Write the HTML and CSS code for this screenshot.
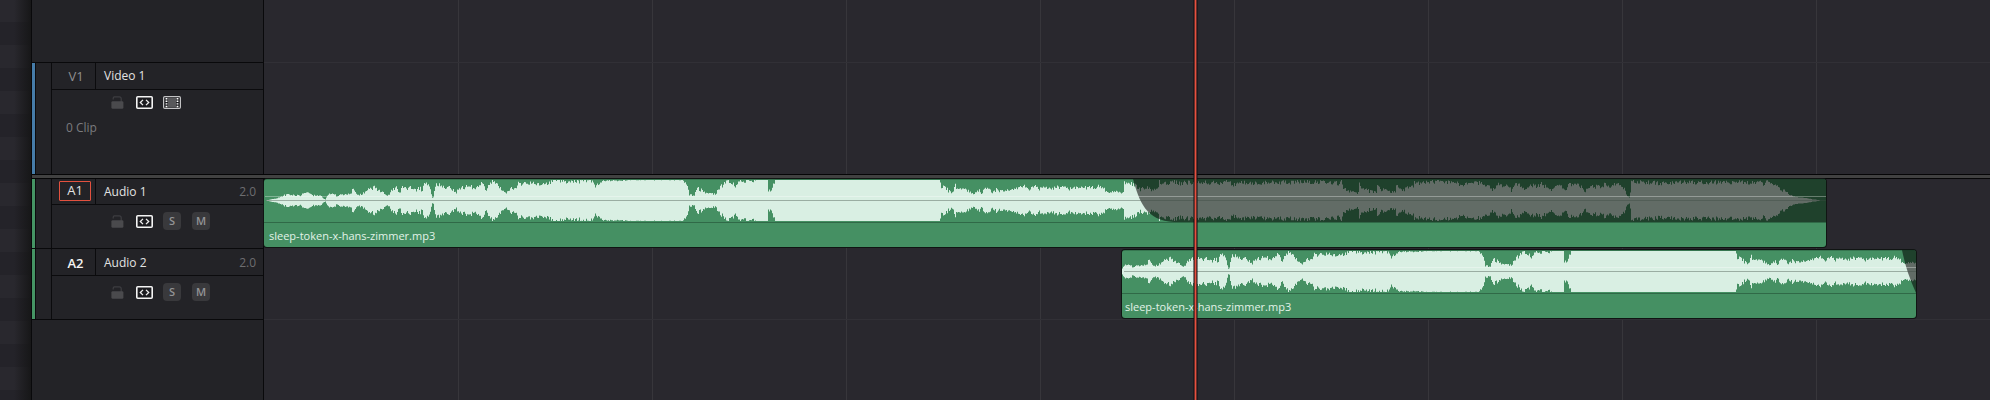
FILE: index.html
```html
<!DOCTYPE html>
<html lang="en">
<head>
<meta charset="utf-8">
<title>Timeline</title>
<link rel="stylesheet" href="styles.css">
</head>
<body>
<svg class="defs" width="0" height="0">
  <symbol id="lock" viewBox="0 0 13 13">
    <path d="M2.2 3.6V2.2Q2.2.9 3.5.9h4.8q1.9 0 1.9 1.9V6" fill="none" stroke="#3e3e42" stroke-width="1.2"/>
    <rect x=".4" y="5.2" width="12" height="7.6" rx="1.4" fill="#4a4a4d"/>
  </symbol>
  <symbol id="auto" viewBox="0 0 17 13">
    <rect x=".8" y=".8" width="15.4" height="11.4" rx="1" fill="#1c1c20" stroke="#f5f5f5" stroke-width="1.6"/>
    <path d="M7 3.9 4.3 6.5 7 9.1M10 3.9l2.7 2.6L10 9.1" fill="none" stroke="#f0f0f0" stroke-width="1.3"/>
  </symbol>
  <symbol id="film" viewBox="0 0 18 13">
    <rect x=".6" y=".6" width="16.8" height="11.8" rx="1.2" fill="#1d1d21" stroke="#c2c2c4" stroke-width="1.2"/>
    <rect x="5" y="2" width="8" height="9" fill="#58585b"/>
    <path d="M3.5 2v9.2M14.5 2v9.2" stroke="#fff" stroke-width="1.8" stroke-dasharray="1.4 1.2"/>
  </symbol>
</svg>
<div class="app">
  <aside class="media-strip"></aside>
  <main class="timeline">
    <div class="row row-top"><div class="head-empty"></div></div>

    <div class="row row-video">
      <div class="head">
        <div class="color video"></div><div class="gutter"></div>
        <div class="body">
          <div class="title"><div class="tag"><span class="dim">V1</span></div><span class="name">Video 1</span></div>
          <div class="tools video-tools">
            <svg class="lock"><use href="#lock"/></svg><svg class="auto"><use href="#auto"/></svg><svg class="film"><use href="#film"/></svg>
          </div>
          <div class="count">0 Clip</div>
        </div>
      </div>
    </div>

    <div class="divider"></div>

    <div class="row row-a1">
      <div class="head">
        <div class="color audio"></div><div class="gutter"></div>
        <div class="body">
          <div class="title"><div class="tag"><span class="target">A1</span></div><span class="name">Audio 1</span><span class="chan">2.0</span></div>
          <div class="tools">
            <svg class="lock"><use href="#lock"/></svg><svg class="auto"><use href="#auto"/></svg><span class="btn">S</span><span class="btn mute">M</span>
          </div>
        </div>
      </div>
      <div class="lane">
        <div class="clip clip-one">
          <svg class="wave" width="1562" height="43" data-start="264">
            <path class="peaks"/>
            <path class="fade" d="M869 0C875 22 882 42 910 43H1562V0Z"/>
          </svg>
          <div class="label">sleep-token-x-hans-zimmer.mp3</div>
        </div>
      </div>
    </div>

    <div class="row row-a2">
      <div class="head">
        <div class="color audio"></div><div class="gutter"></div>
        <div class="body">
          <div class="title"><div class="tag"><span class="strong">A2</span></div><span class="name">Audio 2</span><span class="chan">2.0</span></div>
          <div class="tools">
            <svg class="lock"><use href="#lock"/></svg><svg class="auto"><use href="#auto"/></svg><span class="btn">S</span><span class="btn mute">M</span>
          </div>
        </div>
      </div>
      <div class="lane">
        <div class="clip clip-two">
          <svg class="wave" width="794" height="43" data-start="326">
            <path class="peaks"/>
            <path class="fade" d="M780 0Q784 21 794 43V0Z"/>
          </svg>
          <div class="label">sleep-token-x-hans-zimmer.mp3</div>
        </div>
      </div>
    </div>

    <div class="row row-rest"><div class="head-empty"></div></div>
    <div class="playhead"></div>
  </main>
</div>
<script src="wave.js"></script>
</body>
</html>
```
FILE: styles.css
```css
* { box-sizing: border-box; }
html { height: 400px; overflow: hidden; }
body {
  margin: 0;
  height: 400px;
  background: #29282e;
  color: #e2e2e2;
  font-family: "Open Sans", "Noto Sans", sans-serif;
  font-size: 12px;
  overflow: hidden;
}
.defs { display: block; position: absolute; }
.app { display: flex; width: 1990px; height: 400px; }

.media-strip {
  flex: none;
  width: 32px;
  border-right: 1px solid #09090b;
  background:
    linear-gradient(90deg, transparent 14px, rgba(22, 22, 23, .95) 31px),
    repeating-linear-gradient(#29282e 0 23px, #242329 23px 46px) 0 -1px / 100% 460px;
}

.timeline {
  position: relative;
  flex: 1;
  display: flex;
  flex-direction: column;
  background: repeating-linear-gradient(90deg, transparent 0 193px, #37363b 193px 194px) 233px 0 / 1725px 100% no-repeat;
}
.row { display: flex; }
.row-top { height: 63px; }
.row-video { height: 112px; }
.row-a1 { height: 70px; }
.row-a2 { height: 71px; }
.row-rest { flex: 1; }
.row-top, .row-a2 { background: linear-gradient(#313036, #313036) 0 100% / 100% 1px no-repeat; }

.head, .head-empty {
  flex: none;
  width: 232px;
  background: #232327;
  border-right: 1px solid #09090b;
  border-bottom: 1px solid #09090b;
}
.row-rest .head-empty { border-bottom: 0; }
.head { display: flex; }
.color { width: 4px; border-right: 1px solid #0b0b0d; }
.color.video { background: #467ca9; }
.color.audio { background: #459464; }
.gutter { width: 16px; border-right: 1px solid #0b0b0d; }
.body { flex: 1; display: flex; flex-direction: column; }
.title {
  display: flex;
  align-items: center;
  height: 27px;
  border-bottom: 1px solid #0b0b0d;
}
.row-a1 .title { height: 26px; }
.tag {
  width: 44px;
  height: 100%;
  border-right: 1px solid #0b0b0d;
  display: flex;
  align-items: center;
  justify-content: center;
  font-size: 13px;
  padding-left: 5px;
}
.dim { color: #8f8f91; }
.strong { color: #f4f4f4; font-weight: 600; padding: 2px 1px 0 0; }
.target {
  width: 32px;
  height: 20px;
  margin: -2px 2px 0 0;
  border: 1px solid #e3513f;
  border-radius: 1px;
  line-height: 17px;
  text-align: center;
}
.name { margin-left: 8px; flex: 1; }
.row-video .name { margin-top: -1px; }
.chan { margin-right: 7px; color: #6d6d70; }
.tools { display: flex; align-items: center; height: 18px; margin: 7px 0 0 59px; }
.video-tools { height: 13px; margin-top: 6px; }
.lock { width: 13px; height: 13px; }
.auto { width: 17px; height: 13px; margin-left: 12px; }
.film { width: 18px; height: 13px; margin-left: 10px; }
.btn {
  width: 18px;
  height: 18px;
  margin-left: 10px;
  border-radius: 4px;
  background: #39393c;
  color: #949496;
  font-weight: 600;
  font-size: 11px;
  line-height: 18px;
  text-align: center;
}
.mute { margin-left: 11px; }
.count { margin: 10px 0 0 14px; color: #7b7b7e; line-height: 18px; }

.divider {
  height: 5px;
  margin-top: -1px;
  background: #414141;
  border: solid #050506;
  border-width: 1px 0;
}

.lane { flex: 1; display: flex; align-items: flex-start; }
.clip {
  height: 68px;
  background: #459063;
  border-radius: 3px;
  overflow: hidden;
  box-shadow: 0 0 0 1px #101513;
}
.clip-one { width: 1562px; }
.clip-two { width: 794px; margin: 1px 0 0 858px; }
.wave { display: block; }
.peaks { fill: #d9efe3; }
.fade { fill: rgba(0, 0, 0, .55); }
.label {
  height: 25px;
  border-top: 1px solid #306947;
  padding-left: 5px;
  line-height: 25px;
  font-size: 11px;
  color: #e2f3e8;
}
.clip-two .label { padding-left: 3px; }

.playhead {
  position: absolute;
  left: 1161px;
  top: 0;
  width: 5px;
  height: 400px;
  background: linear-gradient(90deg, rgba(15, 12, 16, .5) 0 1px, #6b2e2a 1px 2px, #e8503e 2px 3px, #6b2e2a 3px 4px, rgba(15, 12, 16, .5) 4px);
}
```
FILE: wave.js
```js
// Envelope segments: [origin x, [offset in thirds of a pixel, half height, ...]]
const SEGMENTS = [
  [260, [18,0,30,1,50,2,72,5,80,6,100,5,120,5,132,8.5,150,7,160,4.5,185,4,190,2,197,1,202,5,213,7,225,5,240,5,262,6,272,7,280,11,290,6,300,6,312,8,325,10,340,13,350,12,365,9,380,5,386,5,395,10,405,13,412,12,420,7,428,15,435,13,445,12,455,13,470,10,480,13,487,9,493,17,508,17,512,9,519,1,524,9,527,16,540,15,545,14,555,13,570,14,580,10,590,8,600,12,625,14,640,13,650,13,665,17,680,11,690,18,705,19,720,13,740,8,755,12,770,14,775,20,780,15,790,18,800,17,820,17,850,17,870,18,890,20,920,18,950,19,988,19]],
  [590, [0,20,10,19,15,15,28,15,35,20,100,20,130,21,280,20.5,290,18,297,7,300,5,315,6,320,12,340,10,350,7,380,7,382,12,400,15,408,20,420,19,425,17,437,15,445,19,465,18.5,470,21,490,19.5,500,21,533,21,535,8,543,11,553,17,558,22]],
  [900, [121,22,122,14,130,14,140,12,152,8,162,9,165,17,170,13,185,13,200,11,217,7,225,8,235,11,245,7,262,14,275,8,290,11,305,9,325,11,345,12,370,15,385,12,410,14,420,11,435,14,450,12,470,13,490,14,510,11,530,13,560,13,580,13,600,14,615,12,620,8,640,9,665,8,670,9,673,19,680,16,695,17,705,15,720,11,740,13,755,11,770,12,775,13,778,19,790,16,800,17,820,19,840,17,860,18,880,18]],
  [1110, [270,18,300,18,330,17,350,19,370,16,400,18,430,17,460,18,500,18,540,18,580,19,620,18,640,19,670,18,690,17,695,19,700,13,710,9,730,9,745,7,748,17,755,13,765,10,785,9,800,8,803,16,815,11,840,9,858,8,860,18,865,15,880,11,895,13,911,15,913,19,930,17,955,18]],
  [1430, [0,19,60,18,80,17,100,16,125,18,160,17,175,15,180,13,185,10,195,12,200,17,210,15,220,13,230,16,245,10,250,12,258,17,270,15,290,11,300,15,320,14,335,17,345,14,365,10,380,14,390,17,400,12,410,12,415,17,430,14,445,17,465,9,475,11,490,14,510,13,525,16,540,13,550,16,570,17,575,14,585,11,590,7,597,3,601,3,603,19,620,19,650,18,700,17,750,18,800,18,850,18,900,18,930,19,960,18,985,19,1000,16,1015,19,1030,17,1040,17,1050,12,1060,10,1070,8,1080,6,1090,4,1110,3,1130,2.5,1150,1,1165,0.5,1175,0,1200,0]],
];

const points = [];
for (const [origin, list] of SEGMENTS) {
  for (let i = 0; i < list.length; i += 2) points.push([origin + list[i] / 3, list[i + 1]]);
}

function jitter(n) {
  const s = Math.sin(n * 127.1) * 43758.5453;
  return s - Math.floor(s);
}

function amplitude(x) {
  let i = 1;
  while (i < points.length - 1 && points[i][0] < x) i++;
  const [x0, a0] = points[i - 1];
  const [x1, a1] = points[i];
  const t = Math.min(1, Math.max(0, (x - x0) / (x1 - x0)));
  const a = a0 + (a1 - a0) * t;
  const spread = a > 19.9 ? 1.4 : a > 9 ? 4.4 : a > 4 ? 2.6 : 0.3;
  return Math.max(0, Math.min(20.5, a + (jitter(x) - 0.5) * spread));
}

for (const svg of document.querySelectorAll('.wave')) {
  const width = Number(svg.getAttribute('width'));
  const start = Number(svg.dataset.start);
  let top = '';
  let bottom = '';
  for (let x = 0; x < width; x++) {
    const a = amplitude(start + x + 0.5);
    top += `L${x} ${(21.5 - a).toFixed(1)}H${x + 1}`;
    bottom = `L${x + 1} ${(21.5 + a).toFixed(1)}H${x}` + bottom;
  }
  svg.querySelector('.peaks').setAttribute('d', 'M0 21.5' + top + bottom + 'Z');

  const line = (y, x, fill) => {
    const r = document.createElementNS('http://www.w3.org/2000/svg', 'rect');
    r.setAttribute('x', x);
    r.setAttribute('y', y);
    r.setAttribute('width', width);
    r.setAttribute('height', 1);
    r.setAttribute('fill', fill);
    svg.append(r);
  };
  line(0, 0, 'rgba(20,60,35,.3)');
  line(17, 1, 'rgba(255,255,255,.32)');
  line(21, 2, 'rgba(60,75,66,.4)');
}
```
